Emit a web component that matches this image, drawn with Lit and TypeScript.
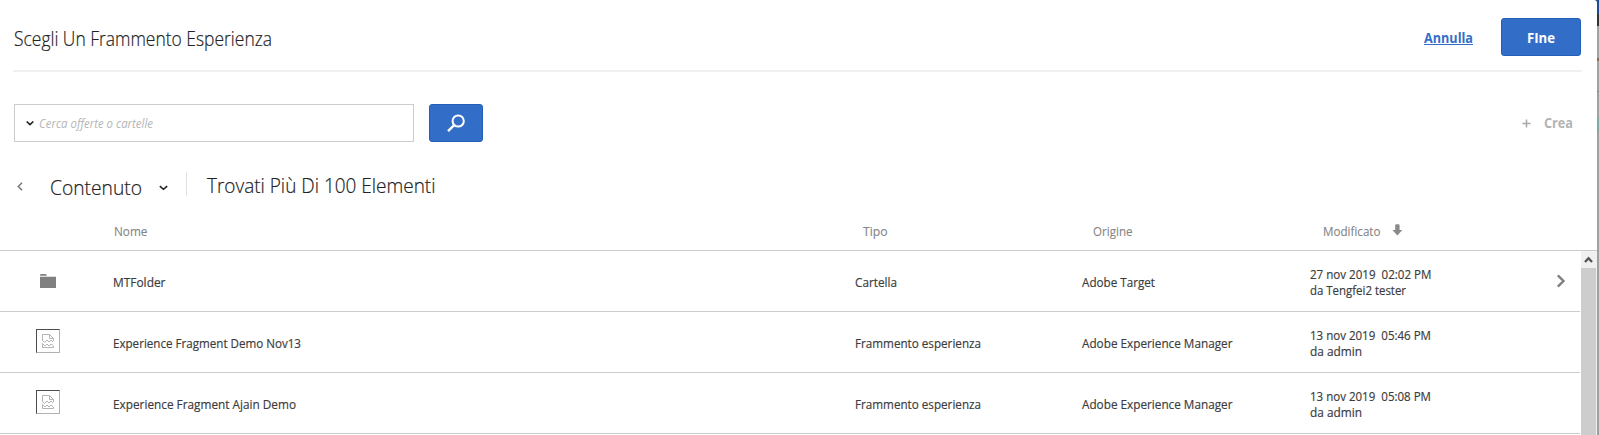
import { LitElement, html, css } from "lit";

const rows = [
  { folder: true, name: "MTFolder", nw: 52.5, type: "Cartella", tw: 42, src: "Adobe Target", sw: 73, date: "27 nov 2019\u00a0 02:02 PM", dw: 121.5, by: "da Tengfei2 tester", bw: 96 },
  { folder: false, name: "Experience Fragment Demo Nov13", nw: 188, type: "Frammento esperienza", tw: 126, src: "Adobe Experience Manager", sw: 150.5, date: "13 nov 2019\u00a0 05:46 PM", dw: 121, by: "da admin", bw: 52 },
  { folder: false, name: "Experience Fragment Ajain Demo", nw: 183, type: "Frammento esperienza", tw: 126, src: "Adobe Experience Manager", sw: 150.5, date: "13 nov 2019\u00a0 05:08 PM", dw: 121, by: "da admin", bw: 52 },
];

/* One line of text, condensed horizontally to the given width. */
class FitText extends LitElement {
  static properties = { text: {}, w: { type: Number }, scale: { state: true } };
  static styles = css`
    :host { display: inline-block; white-space: nowrap; }
    .box { display: block; }
    .ink { display: inline-block; transform-origin: 0 50%; }
  `;
  declare text: string;
  declare w: number;
  declare scale: number;
  constructor() {
    super();
    this.scale = 1;
  }
  firstUpdated() {
    const ink = this.shadowRoot!.querySelector<HTMLElement>(".ink")!;
    this.scale = this.w / ink.getBoundingClientRect().width;
  }
  render() {
    return html`<span class="box" style="width:${this.w}px"><span class="ink" style="transform:scaleX(${this.scale})">${this.text}</span></span>`;
  }
}
customElements.define("fit-text", FitText);

const fit = (text: string, w: number) => html`<fit-text .text=${text} .w=${w}></fit-text>`;

class AppRoot extends LitElement {
  static styles = css`
    :host { display: block; height: 435px; overflow: hidden; font-family: "Open Sans", "Noto Sans", sans-serif; color: #3c3c3c; }
    * { box-sizing: border-box; }
    svg { display: block; flex: none; }
    .page { height: 435px; padding-right: 2px; background: linear-gradient(#1f4a9a 0 14px, #333 14px 26px, #a2a2a2 26px 58px, #8b6c50 58px 61px, #a2a2a2 61px 91px, #888 91px 92px, #a2a2a2 92px 118px, #7fa9a9 118px 131px, #a0a0a0 131px); }
    .dialog { height: 435px; background: #fff; border-radius: 0 3px 0 0; display: flex; flex-direction: column; overflow: hidden; }
    .head { height: 72px; margin: 0 15px 0 13px; border-bottom: 2px solid #f0f0f0; display: flex; align-items: flex-start; padding: 18px 1px 0 0; white-space: nowrap; }
    .title { font-size: 20px; font-weight: 300; line-height: 28px; color: #222; padding: 7px 0 0 0.5px; flex: 1; -webkit-text-stroke: 0.2px; }
    .cancel { font-size: 14.5px; font-weight: 700; line-height: 20px; color: #326ec8; padding-top: 10px; margin-right: 28px; }
    .line { display: block; height: 17px; border-bottom: 1px solid #326ec8; }
    .btn { background: #326ec8; border: 1px solid #2260b8; border-radius: 3px; height: 38px; display: flex; align-items: center; justify-content: center; color: #fff; }
    .done { width: 80px; font-size: 14.5px; font-weight: 700; line-height: 20px; padding-top: 1px; }
    .tools { height: 38px; margin: 32px 24px 0 14px; display: flex; white-space: nowrap; }
    .search { width: 400px; height: 38px; border: 1px solid #ccc; display: flex; align-items: center; padding-left: 11px; gap: 5px; font-size: 13px; font-style: italic; color: #b5b5b5; }
    .go { width: 54px; margin-left: 15px; }
    .create { margin-left: auto; display: flex; align-items: center; gap: 13px; font-size: 14px; font-weight: 700; color: #b3b3b3; padding-bottom: 1px; }
    .plus { margin-top: 2px; }
    .crumbs { height: 62px; display: flex; align-items: flex-start; font-size: 21px; font-weight: 300; line-height: 28px; color: #222; padding-left: 17px; white-space: nowrap; -webkit-text-stroke: 0.2px; }
    .back { margin: 40px 27px 0 0; }
    .place { padding-top: 31px; }
    .down { margin: 43px 18px 0 16.5px; }
    .sep { width: 1px; height: 24px; margin-top: 30px; background: #e2e2e2; }
    .found { padding: 29px 0 0 20px; }
    .cols { height: 47px; border-bottom: 1px solid #ccc; display: grid; grid-template-columns: 749px 230.5px 230px 1fr; padding: 19px 0 0 113.5px; font-size: 13px; line-height: 16px; color: #858585; -webkit-text-stroke: 0.12px; }
    .mod { display: flex; gap: 11.5px; }
    .sort { margin-top: 1px; }
    .list { flex: 1; display: flex; min-height: 0; }
    .rows { width: 1580px; }
    .row { height: 61px; border-bottom: 1px solid #ccc; display: grid; grid-template-columns: 112.5px 742px 227.5px 227.5px 246.5px 1fr; font-size: 13px; line-height: 16px; white-space: nowrap; -webkit-text-stroke: 0.18px; }
    .cell { padding-top: 23px; }
    .when { padding-top: 15px; display: flex; flex-direction: column; align-items: flex-start; }
    .folder { margin: 23px 0 0 40px; }
    .thumb { width: 24px; height: 24px; margin: 17px 0 0 36px; border: 1px solid; border-color: #4c4c4c #b2b2b2 #b2b2b2 #4c4c4c; padding: 4px 5px; }
    .open { margin-top: 23px; }
    .bar { width: 16px; margin-left: 1px; border-right: 1px solid #f0f0f0; background: #cdcdcd; }
    .up { height: 17px; background: #f0f0f0; padding: 5px 0 0 3px; }
  `;

  thumb() {
    return html`<div class="thumb"><svg width="12" height="14" viewBox="0 0 12 14"><g fill="none" stroke="#b4b4b4"><path d="M.5 7V.5h7L11.500 4.500V7M7.500 .5v4h4"/><path d="M.5 6.500 2.500 8.500 5 6 7 8 9 6l2 2M.5 13.500V9.500L3 12l2-2 2 2 2-2 2.500 2v1.500z"/></g></svg></div>`;
  }

  render() {
    return html`<div class="page"><div class="dialog">
      <div class="head">
        <div class="title">${fit("Scegli Un Frammento Esperienza", 258)}</div>
        <span class="cancel"><span class="line">${fit("Annulla", 49)}</span></span>
        <div class="btn done">${fit("FIne", 28)}</div>
      </div>
      <div class="tools">
        <div class="search"><svg width="8" height="6" viewBox="0 0 8 6"><path d="M.7 1.500 4 4.600 7.300 1.500" fill="none" stroke="#222" stroke-width="1.700"/></svg>${fit("Cerca offerte o cartelle", 114)}</div>
        <div class="btn go"><svg width="18" height="18" viewBox="0 0 18 18"><circle cx="11.200" cy="7" r="5.600" fill="none" stroke="#fff" stroke-width="2"/><path d="M7.200 11.200 1 17.200" stroke="#fff" stroke-width="2.300"/></svg></div>
        <div class="create"><svg class="plus" width="9" height="9" viewBox="0 0 9 9"><path d="M4.500 .5v8M.5 4.500h8" stroke="#a8a8a8" stroke-width="1.500"/></svg>${fit("Crea", 29)}</div>
      </div>
      <div class="crumbs">
        <svg class="back" width="6" height="9" viewBox="0 0 6 9"><path d="M5 .7 1.300 4.500 5 8.300" fill="none" stroke="#777" stroke-width="1.500"/></svg>
        <span class="place">${fit("Contenuto", 92)}</span>
        <svg class="down" width="9" height="6" viewBox="0 0 9 6"><path d="M.8 1.200 4.500 4.300 8.200 1.200" fill="none" stroke="#222" stroke-width="1.600"/></svg>
        <span class="sep"></span>
        <span class="found">${fit("Trovati Più Di 100 Elementi", 228.5)}</span>
      </div>
      <div class="cols">
        <span>${fit("Nome", 33.5)}</span><span>${fit("Tipo", 24.5)}</span><span>${fit("Origine", 39.5)}</span>
        <span class="mod">${fit("Modificato", 57.5)}<svg class="sort" width="11" height="12" viewBox="0 0 11 12"><path d="M3.200 1.400Q3.200 .2 4.400 .2h2q1.200 0 1.200 1.200V6h2.700L5.400 11.400.4 6h2.800z" fill="#8a8a8a"/></svg></span>
      </div>
      <div class="list">
        <div class="rows">${rows.map(r => html`<div class="row">
          <div>${r.folder ? html`<svg class="folder" width="17" height="14" viewBox="0 0 17 14"><path d="M0 1.600Q0 0 1 0h4.500Q6.500 0 7 1.800H0zM0 2.800h16V14H0z" fill="#808080"/></svg>` : this.thumb()}</div>
          <div class="cell">${fit(r.name, r.nw)}</div>
          <div class="cell">${fit(r.type, r.tw)}</div>
          <div class="cell">${fit(r.src, r.sw)}</div>
          <div class="when">${fit(r.date, r.dw)}${fit(r.by, r.bw)}</div>
          ${r.folder ? html`<svg class="open" width="10" height="14" viewBox="0 0 10 14"><path d="M1.800 1.300 7.500 7 1.800 12.700" fill="none" stroke="#808080" stroke-width="2.400"/></svg>` : ""}
        </div>`)}</div>
        <div class="bar"><div class="up"><svg width="9" height="8" viewBox="0 0 9 8"><path d="M1 6 4.500 2.300 8 6" fill="none" stroke="#555" stroke-width="2.400"/></svg></div></div>
      </div>
    </div></div>`;
  }
}
customElements.define("app-root", AppRoot);
